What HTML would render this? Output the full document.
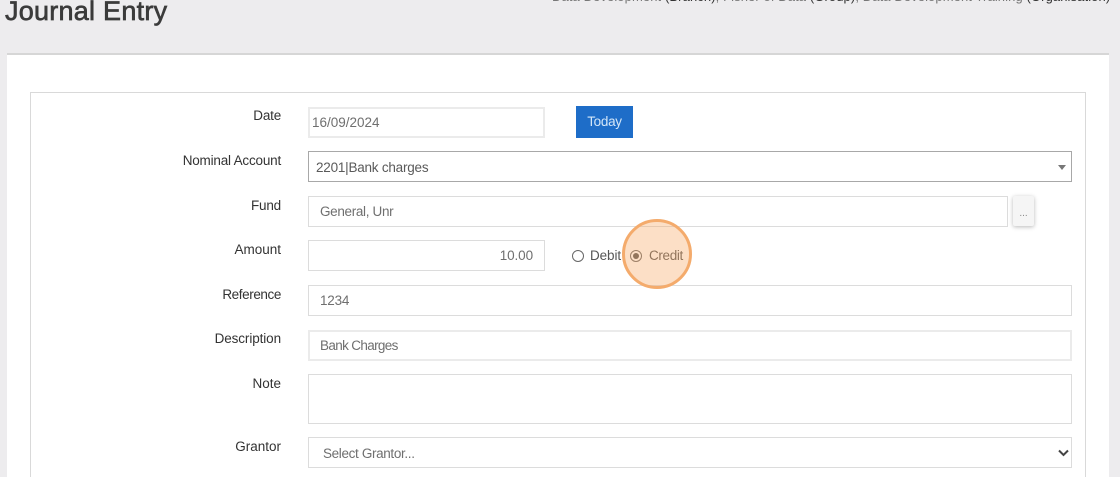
<!DOCTYPE html>
<html lang="en">
<head>
<meta charset="utf-8">
<title>Journal Entry</title>
<style>
html,body{margin:0;padding:0;width:1120px;height:477px;overflow:hidden}
#p{width:1120px;height:477px;position:relative;overflow:hidden;background:#edecee;font-family:"Liberation Sans",sans-serif;color:#333}
.a{position:absolute;white-space:nowrap}
.box{position:absolute;box-sizing:border-box;background:#fff;border:1px solid #dcdcdc}
.lbl{position:absolute;right:839px;font-size:13.5px;line-height:16px;color:#333;white-space:nowrap}
.val{position:absolute;font-size:13.5px;line-height:16px;color:#6f6f6f;white-space:nowrap}
</style>
</head>
<body>
<div id="p">
<div class="a" style="left:5px;top:-5px;font-size:27px;line-height:32px;font-weight:400;color:#3b3b3b;-webkit-text-stroke:.65px #3b3b3b;letter-spacing:.25px">Journal Entry</div>
<div class="a" style="left:552px;top:-11px;font-size:13px;line-height:16px;color:#777;letter-spacing:.1px">Data Development <span style="color:#333">(Branch)</span>, Fisher of Data <span style="color:#333">(Group)</span>, Data Development Training <span style="color:#333">(Organisation)</span></div>

<div class="a" style="left:7px;top:53px;width:1102px;height:424px;background:#fff;border-top:2px solid #d6d6d6;box-sizing:border-box"></div>
<div class="a" style="left:30px;top:92px;width:1056px;height:385px;box-sizing:border-box;border:1px solid #d9d9d9;border-bottom:0"></div>

<div class="lbl" style="top:108px;letter-spacing:-.2px">Date</div>
<div class="box" style="left:308px;top:107px;width:237px;height:31px;border:2px solid #ebebeb"></div>
<div class="val" style="left:312px;top:115px;letter-spacing:0">16/09/2024</div>
<div class="a" style="left:576px;top:106px;width:57px;height:32px;background:#1e6dc8;color:#d3e6f8;font-size:13.5px;line-height:32px;text-align:center;letter-spacing:-.3px">Today</div>

<div class="lbl" style="top:153px;letter-spacing:-.2px">Nominal Account</div>
<div class="box" style="left:308px;top:151px;width:764px;height:31px;border:1px solid #a8a8a8"></div>
<div class="val" style="left:316px;top:160px;color:#5a5a5a;letter-spacing:-.22px">2201|Bank charges</div>
<div class="a" style="left:1058px;top:165px;width:0;height:0;border-left:4px solid transparent;border-right:4px solid transparent;border-top:5px solid #777"></div>

<div class="lbl" style="top:198px;letter-spacing:-.2px">Fund</div>
<div class="box" style="left:308px;top:196px;width:700px;height:31px"></div>
<div class="val" style="left:320px;top:204px;letter-spacing:-.33px">General, Unr</div>
<div class="a" style="left:1013px;top:196px;width:21px;height:30px;background:#f5f5f5;box-shadow:0 1px 4px rgba(0,0,0,.28);border-radius:2px;color:#888;font-size:10px;line-height:36px;text-align:center">...</div>

<div class="lbl" style="top:242px">Amount</div>
<div class="box" style="left:308px;top:240px;width:237px;height:31px"></div>
<div class="val" style="right:587px;top:248px;letter-spacing:-.1px">10.00</div>
<div class="a" style="left:572px;top:250px;width:12px;height:12px;box-sizing:border-box;border:1px solid #666;border-radius:50%;background:#fff"></div>
<div class="val" style="left:590px;top:248px;color:#555;letter-spacing:-.1px">Debit</div>
<div class="a" style="left:630px;top:250px;width:12px;height:12px;box-sizing:border-box;border:1px solid #666;border-radius:50%;background:#fff"></div>
<div class="a" style="left:633px;top:253px;width:6px;height:6px;border-radius:50%;background:#555"></div>
<div class="val" style="left:649px;top:248px;color:#555;letter-spacing:-.35px">Credit</div>

<div class="lbl" style="top:287px;letter-spacing:-.4px">Reference</div>
<div class="box" style="left:308px;top:285px;width:764px;height:31px"></div>
<div class="val" style="left:320px;top:293px;letter-spacing:-.2px">1234</div>

<div class="lbl" style="top:331px;letter-spacing:-.1px">Description</div>
<div class="box" style="left:308px;top:330px;width:764px;height:31px;border:2px solid #ebebeb"></div>
<div class="val" style="left:320px;top:338px;letter-spacing:-.65px">Bank Charges</div>

<div class="lbl" style="top:376px">Note</div>
<div class="box" style="left:308px;top:374px;width:764px;height:50px"></div>

<div class="lbl" style="top:439px">Grantor</div>
<div class="box" style="left:308px;top:437px;width:764px;height:31px"></div>
<div class="val" style="left:323px;top:446px;letter-spacing:-.35px">Select Grantor...</div>
<svg class="a" style="left:1057px;top:449px" width="13" height="8" viewBox="0 0 13 8"><path d="M2 1.5 L6.5 6 L11 1.5" fill="none" stroke="#444" stroke-width="2"/></svg>

<div class="a" style="left:622px;top:219px;width:70px;height:70px;box-sizing:border-box;border:3px solid #f4ab6c;border-radius:50%;background:rgba(248,170,105,.38)"></div>
</div>
</body>
</html>
